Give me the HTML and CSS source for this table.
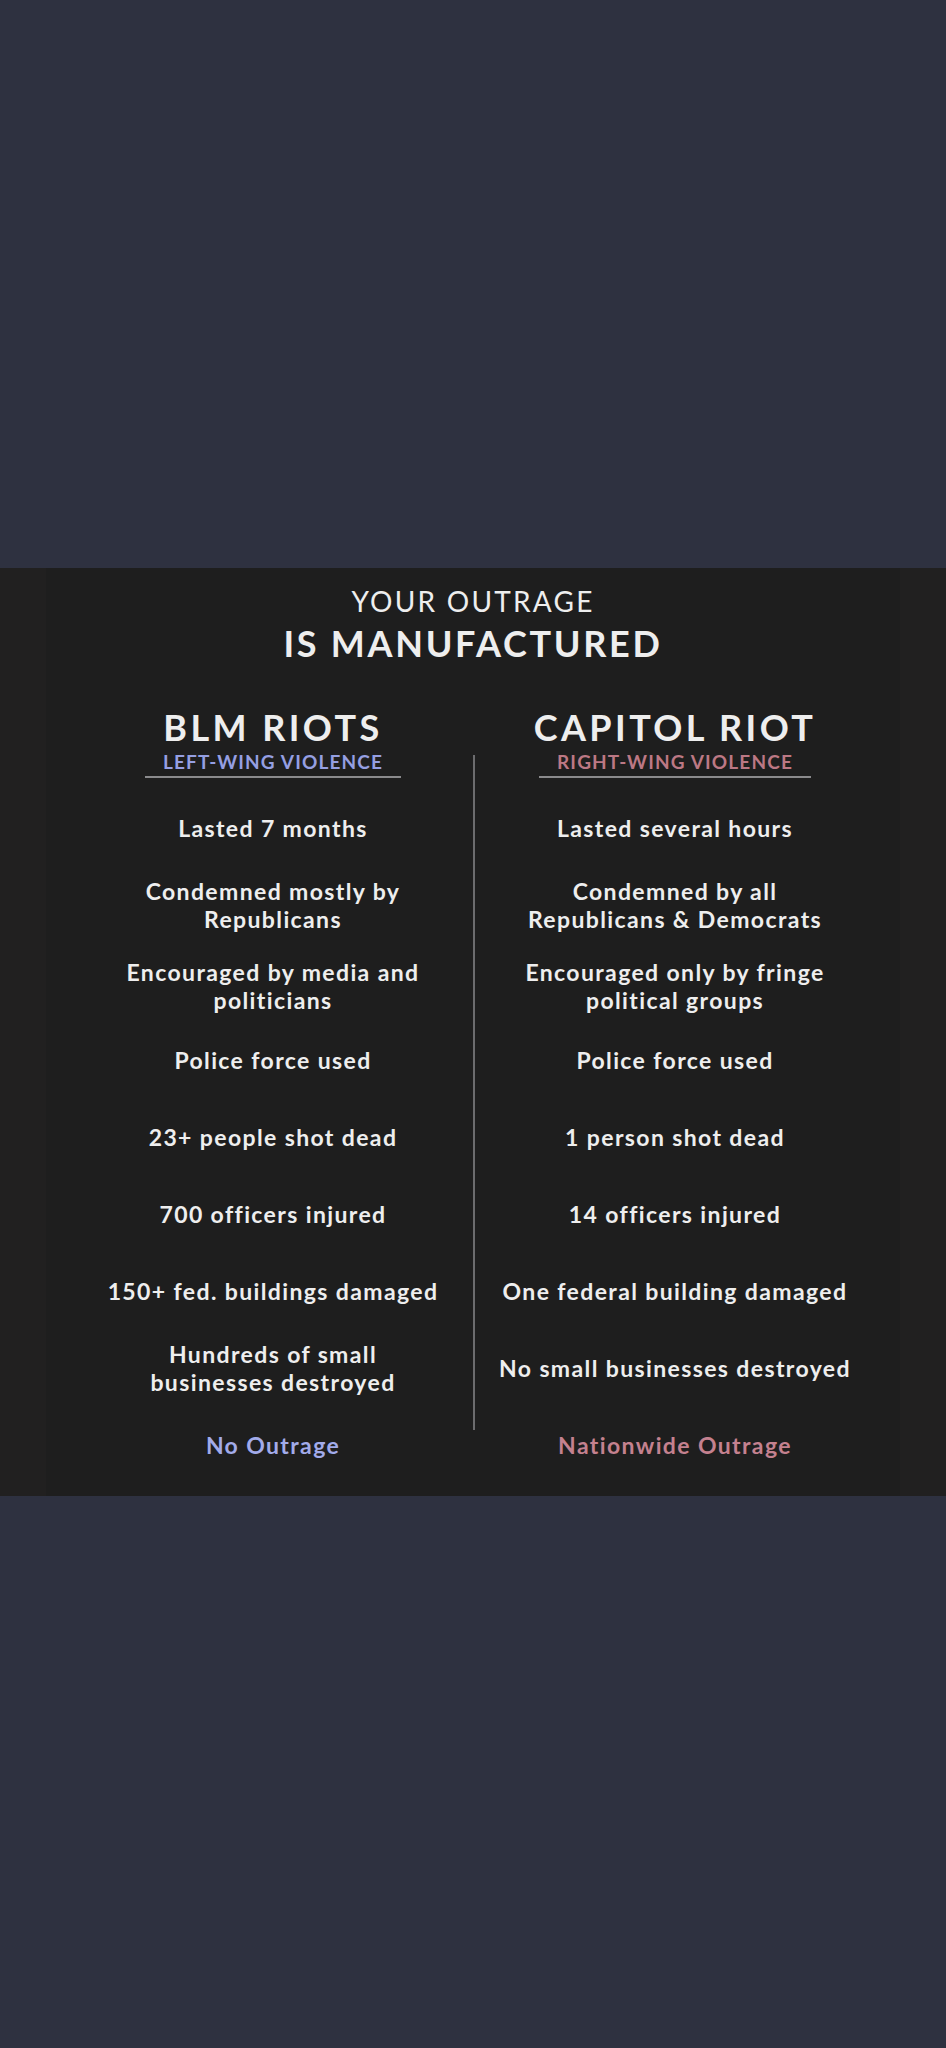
FILE: index.html
```html
<!DOCTYPE html>
<html lang="en">
<head>
<meta charset="utf-8">
<title>Your Outrage Is Manufactured</title>
<link rel="stylesheet" href="styles.css">
</head>
<body>
<main class="page">
  <section class="panel">
    <div class="inner">
      <header class="title">
        <p class="title-top">YOUR OUTRAGE</p>
        <h1 class="title-main">IS MANUFACTURED</h1>
      </header>
      <div class="compare">
        <div class="col">
          <div class="col-head">
            <h2 class="col-title">BLM RIOTS</h2>
            <span class="col-sub sub-left">LEFT-WING VIOLENCE</span>
          </div>
          <div class="rows">
            <p class="row">Lasted 7 months</p>
            <p class="row">Condemned mostly by<br>Republicans</p>
            <p class="row row-shift">Encouraged by media and<br>politicians</p>
            <p class="row">Police force used</p>
            <p class="row">23+ people shot dead</p>
            <p class="row">700 officers injured</p>
            <p class="row">150+ fed. buildings damaged</p>
            <p class="row">Hundreds of small<br>businesses destroyed</p>
            <p class="row verdict verdict-left">No Outrage</p>
          </div>
        </div>
        <div class="divider"></div>
        <div class="col">
          <div class="col-head">
            <h2 class="col-title">CAPITOL RIOT</h2>
            <span class="col-sub sub-right">RIGHT-WING VIOLENCE</span>
          </div>
          <div class="rows">
            <p class="row">Lasted several hours</p>
            <p class="row">Condemned by all<br>Republicans &amp; Democrats</p>
            <p class="row row-shift">Encouraged only by fringe<br>political groups</p>
            <p class="row">Police force used</p>
            <p class="row">1 person shot dead</p>
            <p class="row">14 officers injured</p>
            <p class="row">One federal building damaged</p>
            <p class="row">No small businesses destroyed</p>
            <p class="row verdict verdict-right">Nationwide Outrage</p>
          </div>
        </div>
      </div>
    </div>
  </section>
</main>
</body>
</html>
```

FILE: styles.css
```css
* {
  box-sizing: border-box;
}

html, body {
  margin: 0;
  padding: 0;
  background: #2e3140;
}

body {
  font-family: Lato, "Open Sans", "Liberation Sans", sans-serif;
  color: #eeeeee;
}

.page {
  min-height: 2048px;
  padding-top: 568px;
}

.panel {
  background: #212020;
  padding: 0 46px;
}

.inner {
  background: #1e1e1e;
  padding: 17px 0 12px;
}

.title {
  text-align: center;
}

.title-top {
  margin: 0;
  font-size: 28px;
  line-height: 1.2;
  font-weight: 400;
  letter-spacing: 0.08em;
}

.title-main {
  margin: 3px 0 0;
  font-size: 36px;
  line-height: 1.2;
  font-weight: 700;
  letter-spacing: 0.075em;
}

.compare {
  margin-top: 40px;
  display: grid;
  grid-template-columns: 400px 2px 400px;
  justify-content: center;
  padding-left: 2px;
}

.col {
  display: flex;
  flex-direction: column;
  align-items: center;
}

.col-head {
  display: flex;
  flex-direction: column;
  align-items: center;
}

.col-title {
  margin: 0;
  font-size: 36px;
  line-height: 45px;
  font-weight: 700;
  letter-spacing: 0.095em;
}

.col-sub {
  display: inline-block;
  padding: 0 18px 3px;
  border-bottom: 2px solid #8a8a8c;
  font-size: 19px;
  line-height: 23px;
  font-weight: 700;
  letter-spacing: 0.06em;
}

.sub-left {
  color: #959fe2;
}

.sub-right {
  color: #bc7884;
}

.rows {
  margin-top: 12px;
  display: grid;
  grid-auto-rows: 77.14px;
  width: 100%;
}

.row {
  margin: 0;
  display: flex;
  align-items: center;
  justify-content: center;
  text-align: center;
  font-size: 23px;
  line-height: 28px;
  font-weight: 700;
  letter-spacing: 0.06em;
}

.row-shift {
  padding-top: 6px;
}

.verdict-left {
  color: #a2abea;
}

.verdict-right {
  color: #c4818f;
}

.divider {
  background: #6c6c6e;
  margin: 50px 0 54px;
}
```
